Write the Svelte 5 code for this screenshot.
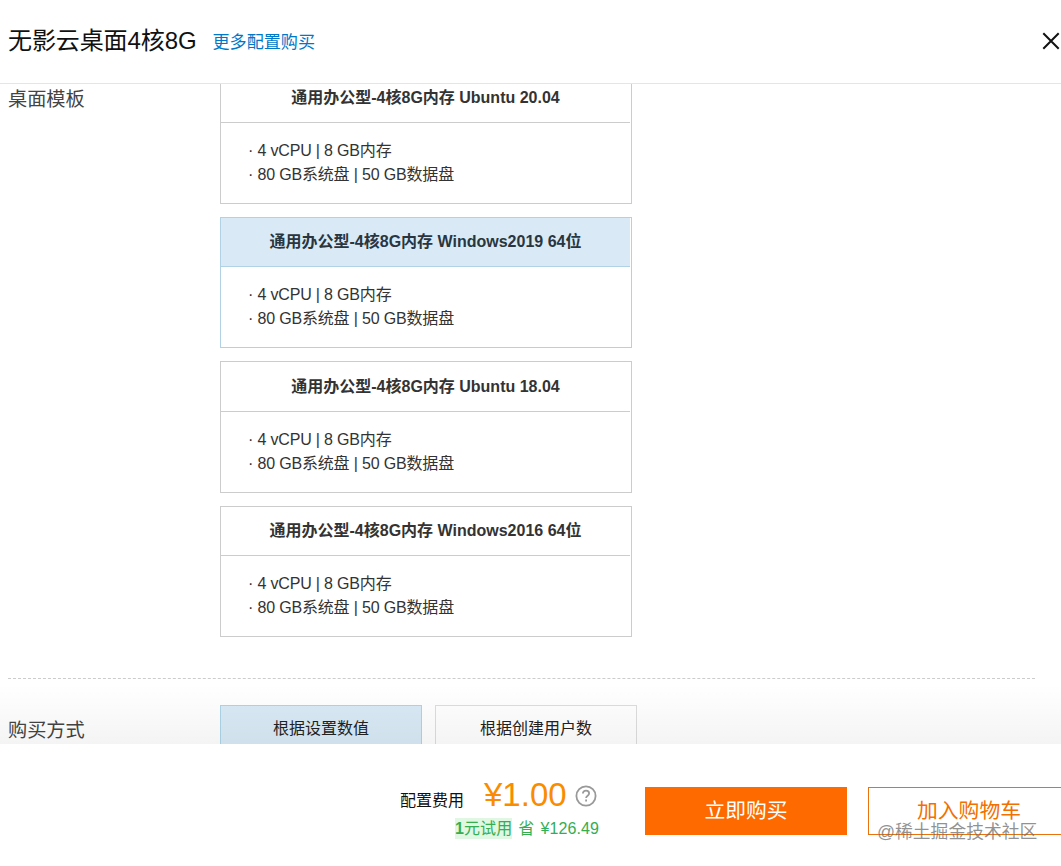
<script>
  let templates = [
    { id: 1, name: "通用办公型-4核8G内存 Ubuntu 20.04" },
    { id: 2, name: "通用办公型-4核8G内存 Windows2019 64位" },
    { id: 3, name: "通用办公型-4核8G内存 Ubuntu 18.04" },
    { id: 4, name: "通用办公型-4核8G内存 Windows2016 64位" },
  ];
  let specs = ["4 vCPU | 8 GB内存", "80 GB系统盘 | 50 GB数据盘"];
  let modes = ["根据设置数值", "根据创建用户数"];

  let selectedTemplate = 2;
  let selectedMode = 0;
</script>

<div class="dialog">
  <header>
    <h1>无影云桌面4核8G</h1>
    <a class="more" href="#more">更多配置购买</a>
    <button class="close" aria-label="关闭">
      <svg width="18" height="18" viewBox="0 0 18 18">
        <path d="M1.3 1.3L16.7 16.7M16.7 1.3L1.3 16.7" />
      </svg>
    </button>
  </header>

  <main>
    <section class="row templates">
      <div class="label">桌面模板</div>
      <div class="cards">
        {#each templates as item}
          <button
            class="card"
            class:active={selectedTemplate === item.id}
            on:click={() => (selectedTemplate = item.id)}
          >
            <span class="card-title">{item.name}</span>
            <span class="card-body">
              {#each specs as spec}
                <span class="spec">· {spec}</span>
              {/each}
            </span>
          </button>
        {/each}
      </div>
    </section>

    <section class="row modes">
      <div class="label">购买方式</div>
      <div class="options">
        {#each modes as mode, i}
          <button
            class="option"
            class:active={selectedMode === i}
            on:click={() => (selectedMode = i)}>{mode}</button
          >
        {/each}
      </div>
    </section>
    <div class="fade"></div>
  </main>

  <footer>
    <div class="fee">
      <div class="fee-row">
        <span class="fee-label">配置费用</span>
        <span class="price">¥1.00</span>
        <svg class="help" width="22" height="22" viewBox="0 0 22 22">
          <circle cx="11" cy="11" r="9.6" />
          <path d="M7.9 8.6C7.9 6.7 9.2 5.7 11 5.7s3.1 1.1 3.1 2.7c0 2.3-3 2.3-3 4.6" />
          <path d="M11.1 14.6v1.9" />
        </svg>
      </div>
      <div class="discount"><span class="tag"><b>1</b>元试用</span><span>省</span><span>¥126.49</span></div>
    </div>
    <button class="buy">立即购买</button>
    <button class="cart">加入购物车</button>
    <span class="watermark">@稀土掘金技术社区</span>
  </footer>
</div>

<style>
  :global(body) {
    overflow: hidden;
  }

  * {
    box-sizing: border-box;
  }

  button {
    padding: 0;
    font-family: inherit;
    background: none;
    border: none;
    cursor: pointer;
  }

  .dialog {
    display: flex;
    flex-direction: column;
    width: 1061px;
    height: 866px;
    overflow: hidden;
    background: #fff;
    color: #333;
    font-family: "Liberation Sans", "Noto Sans CJK SC", sans-serif;
  }

  /* Header */
  header {
    display: flex;
    flex: none;
    align-items: center;
    height: 84px;
    padding: 0 1px 2px 8px;
    border-bottom: 1px solid #e5e5e5;
  }

  h1 {
    margin: 0;
    color: #111;
    font-size: 24px;
    font-weight: 400;
    line-height: 36px;
    letter-spacing: -0.1px;
    white-space: nowrap;
  }

  .more {
    margin: 5px 0 0 16px;
    color: #0078c8;
    font-size: 17.1px;
    line-height: 26px;
    text-decoration: none;
  }

  .close {
    height: 18px;
    margin-left: auto;
  }

  .close svg {
    display: block;
    fill: none;
    stroke: #111;
    stroke-width: 2;
  }

  /* Content */
  main {
    position: relative;
    flex: none;
    height: 660px;
    overflow: hidden;
  }

  .row {
    display: flex;
    margin: 0 26px 0 8px;
  }

  .label {
    flex: none;
    width: 212px;
    color: #444;
    font-size: 19.2px;
    line-height: 32px;
  }

  .templates {
    height: 595px;
    border-bottom: 1px dashed #ccc;
  }

  .cards {
    display: flex;
    flex-direction: column;
    gap: 13px;
    width: 412px;
    margin-top: -11px;
  }

  .card {
    display: block;
    flex: none;
    border: 1px solid #ccc;
    color: #333;
    font-size: 16px;
    text-align: left;
  }

  .card-title {
    display: block;
    height: 49px;
    margin-right: 1px;
    border-bottom: 1px solid #ccc;
    font-weight: 700;
    line-height: 48px;
    text-align: center;
    white-space: nowrap;
  }

  .card:nth-child(3) .card-title {
    height: 50px;
    line-height: 49px;
  }

  .card:first-child .card-title,
  .card:nth-child(3) .card-title {
    padding-top: 0;
  }

  .card-body {
    display: block;
    height: 80px;
    padding: 16px 0 0 27px;
    letter-spacing: -0.17px;
  }

  .spec {
    display: block;
    line-height: 24px;
    white-space: nowrap;
  }

  .card:first-child .spec {
    line-height: 23.5px;
  }

  .card.active,
  .card.active .card-title {
    border-color: #b1d1e4;
  }

  .card.active .card-title {
    background: #d9eaf6;
    color: #29363f;
  }

  .modes {
    padding-top: 26px;
  }

  .modes .label {
    padding-top: 10px;
  }

  .options {
    display: flex;
    gap: 13px;
  }

  .option {
    width: 202px;
    height: 48px;
    border: 1px solid #ddd;
    background: #fff;
    color: #222;
    font-size: 16px;
    line-height: 44px;
  }

  .option.active {
    border-color: #add4e7;
    background: #d9eaf6;
  }

  .fade {
    position: absolute;
    right: 0;
    bottom: 0;
    left: 0;
    height: 60px;
    background: linear-gradient(rgba(0, 0, 0, 0), rgba(0, 0, 0, 0.045));
    pointer-events: none;
  }

  /* Footer */
  footer {
    position: relative;
    display: flex;
    flex: none;
    height: 122px;
    padding-left: 400px;
  }

  .fee {
    flex: none;
    width: 245px;
    padding-top: 30px;
  }

  .fee-row {
    display: flex;
    align-items: center;
    height: 41px;
  }

  .fee-label {
    margin-top: 13px;
    color: #111;
    font-size: 16px;
    line-height: 24px;
  }

  .price {
    width: 91px;
    margin-left: 20px;
    color: #f98c00;
    font-size: 33px;
    line-height: 38px;
  }

  .help {
    margin-top: 3px;
    fill: none;
    stroke: #999;
    stroke-width: 1.8;
  }

  .discount {
    display: flex;
    gap: 6px;
    padding: 3px 0 0 55px;
    color: #35ad50;
    font-size: 16px;
    line-height: 21px;
    letter-spacing: 0.1px;
  }

  .tag {
    background: #e0f7e3;
  }

  .buy,
  .cart {
    flex: none;
    width: 202px;
    height: 48px;
    margin-top: 43px;
    font-size: 20.8px;
    line-height: 46px;
  }

  .buy {
    background: #ff6a00;
    color: #fff;
  }

  .cart {
    margin-left: 21px;
    border: 1px solid #e9720c;
    color: #f27000;
  }

  .watermark {
    position: absolute;
    top: 75px;
    left: 877px;
    color: rgba(110, 110, 110, 0.75);
    font-size: 17.8px;
    line-height: 26px;
    white-space: nowrap;
  }
</style>
